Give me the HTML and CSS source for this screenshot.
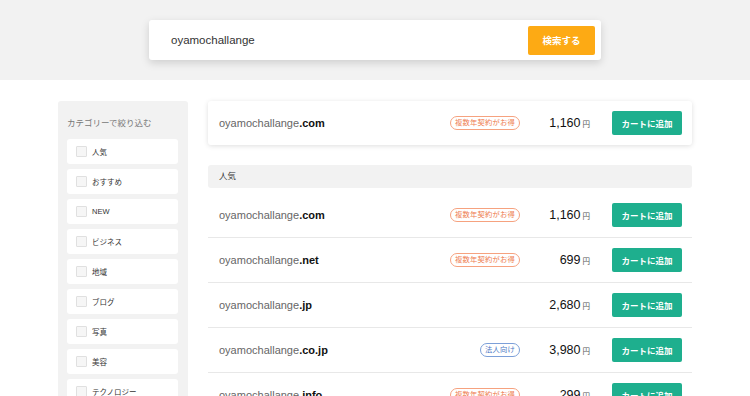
FILE: index.html
```html
<!DOCTYPE html>
<html lang="ja">
  <head>
    <meta charset="UTF-8" />
    <title>ドメイン検索</title>
    <link rel="stylesheet" href="styles.css">
  </head>
  <body>
    <!-- Search header -->
    <div class="search-band">
      <div class="search-box">
        <span class="search-text">oyamochallange</span>
        <button type="button" class="search-btn">検索する</button>
      </div>
    </div>

    <div class="page">
      <!-- Category filter -->
      <aside class="sidebar">
        <div class="sidebar-title">カテゴリーで絞り込む</div>
        <label class="cat"><span class="check"></span>人気</label>
        <label class="cat"><span class="check"></span>おすすめ</label>
        <label class="cat"><span class="check"></span>NEW</label>
        <label class="cat"><span class="check"></span>ビジネス</label>
        <label class="cat"><span class="check"></span>地域</label>
        <label class="cat"><span class="check"></span>ブログ</label>
        <label class="cat"><span class="check"></span>写真</label>
        <label class="cat"><span class="check"></span>美容</label>
        <label class="cat"><span class="check"></span>テクノロジー</label>
      </aside>

      <!-- Results -->
      <main class="results">
        <div class="row featured">
          <div class="domain">oyamochallange<b>.com</b></div>
          <span class="badge orange">複数年契約がお得</span>
          <div class="price">1,160<small>円</small></div>
          <button type="button" class="cart-btn">カートに追加</button>
        </div>

        <div class="section-head">人気</div>

        <div class="row">
          <div class="domain">oyamochallange<b>.com</b></div>
          <span class="badge orange">複数年契約がお得</span>
          <div class="price">1,160<small>円</small></div>
          <button type="button" class="cart-btn">カートに追加</button>
        </div>
        <div class="row">
          <div class="domain">oyamochallange<b>.net</b></div>
          <span class="badge orange">複数年契約がお得</span>
          <div class="price">699<small>円</small></div>
          <button type="button" class="cart-btn">カートに追加</button>
        </div>
        <div class="row">
          <div class="domain">oyamochallange<b>.jp</b></div>
          <div class="price">2,680<small>円</small></div>
          <button type="button" class="cart-btn">カートに追加</button>
        </div>
        <div class="row">
          <div class="domain">oyamochallange<b>.co.jp</b></div>
          <span class="badge blue">法人向け</span>
          <div class="price">3,980<small>円</small></div>
          <button type="button" class="cart-btn">カートに追加</button>
        </div>
        <div class="row">
          <div class="domain">oyamochallange<b>.info</b></div>
          <span class="badge orange">複数年契約がお得</span>
          <div class="price">299<small>円</small></div>
          <button type="button" class="cart-btn">カートに追加</button>
        </div>
      </main>
    </div>
  </body>
</html>
```

FILE: styles.css
```css
body {
  margin: 0;
  font-family: "Liberation Sans", "Noto Sans CJK JP", sans-serif;
  color: #222;
  background: #fff;
  height: 396px;
  overflow: hidden;
}
button {
  font-family: inherit;
  border: none;
  cursor: pointer;
}

/* search header */
.search-band {
  background: #f2f2f2;
  height: 80px;
  padding-top: 20px;
  box-sizing: border-box;
}
.search-box {
  width: 452px;
  height: 40px;
  margin: 0 auto;
  padding: 0 6px 0 22px;
  box-sizing: border-box;
  background: #fff;
  border-radius: 3px;
  box-shadow: 0 3px 8px rgba(0, 0, 0, 0.15);
  display: flex;
  align-items: center;
  justify-content: space-between;
}
.search-text {
  font-size: 11.5px;
  color: #333;
}
.search-btn {
  width: 67px;
  height: 29px;
  background: #fdaa14;
  color: #fff;
  font-size: 9.5px;
  font-weight: bold;
  border-radius: 2px;
}

/* layout */
.page {
  width: 634px;
  margin: 21px auto 0;
  display: flex;
  gap: 20px;
  align-items: flex-start;
}

/* sidebar */
.sidebar {
  width: 130px;
  flex-shrink: 0;
  background: #f2f2f2;
  border-radius: 3px;
  padding: 15px 10px 20px 9px;
  box-sizing: border-box;
  display: flex;
  flex-direction: column;
  gap: 5px;
  min-height: 320px;
}
.sidebar-title {
  font-size: 8.5px;
  color: #777;
  line-height: 14px;
  margin-bottom: 4px;
}
.cat {
  height: 25px;
  flex-shrink: 0;
  background: #fff;
  border-radius: 3px;
  display: flex;
  align-items: center;
  padding-left: 9px;
  font-size: 7.5px;
  color: #333;
}
.check {
  width: 9px;
  height: 9px;
  border: 1px solid #e0e0e0;
  border-radius: 1px;
  background: #f6f6f6;
  margin-right: 5px;
}

/* results */
.results {
  width: 484px;
}
.row {
  height: 44px;
  display: flex;
  align-items: center;
  padding: 0 10px 0 11px;
  border-bottom: 1px solid #e8e8e8;
}
.row.featured {
  border-bottom: none;
  border-radius: 3px;
  box-shadow: 0 1px 5px rgba(0, 0, 0, 0.13);
  margin-bottom: 20px;
}
.domain {
  font-size: 11px;
  color: #666;
  margin-right: auto;
}
.domain b {
  color: #111;
  font-weight: bold;
}
.badge {
  height: 12px;
  line-height: 12px;
  padding: 0 4px;
  border-radius: 8px;
  font-size: 7.3px;
  letter-spacing: 0.2px;
  margin-right: 10px;
}
.badge.orange {
  border: 1px solid #f6a27f;
  color: #ee7d4f;
}
.badge.blue {
  border: 1px solid #7c9fd8;
  color: #4a78c4;
}
.price {
  width: 60px;
  margin-right: 22px;
  text-align: right;
  font-size: 12.5px;
  color: #111;
}
.price small {
  font-size: 7.5px;
  color: #555;
  margin-left: 2px;
}
.cart-btn {
  width: 70px;
  height: 24px;
  background: #1eaf8e;
  color: #fff;
  font-size: 8.5px;
  font-weight: bold;
  border-radius: 2px;
}
.section-head {
  height: 23px;
  background: #f2f2f2;
  border-radius: 3px;
  padding-left: 11px;
  font-size: 8.5px;
  line-height: 23px;
  color: #333;
  margin-bottom: 5px;
}
```
